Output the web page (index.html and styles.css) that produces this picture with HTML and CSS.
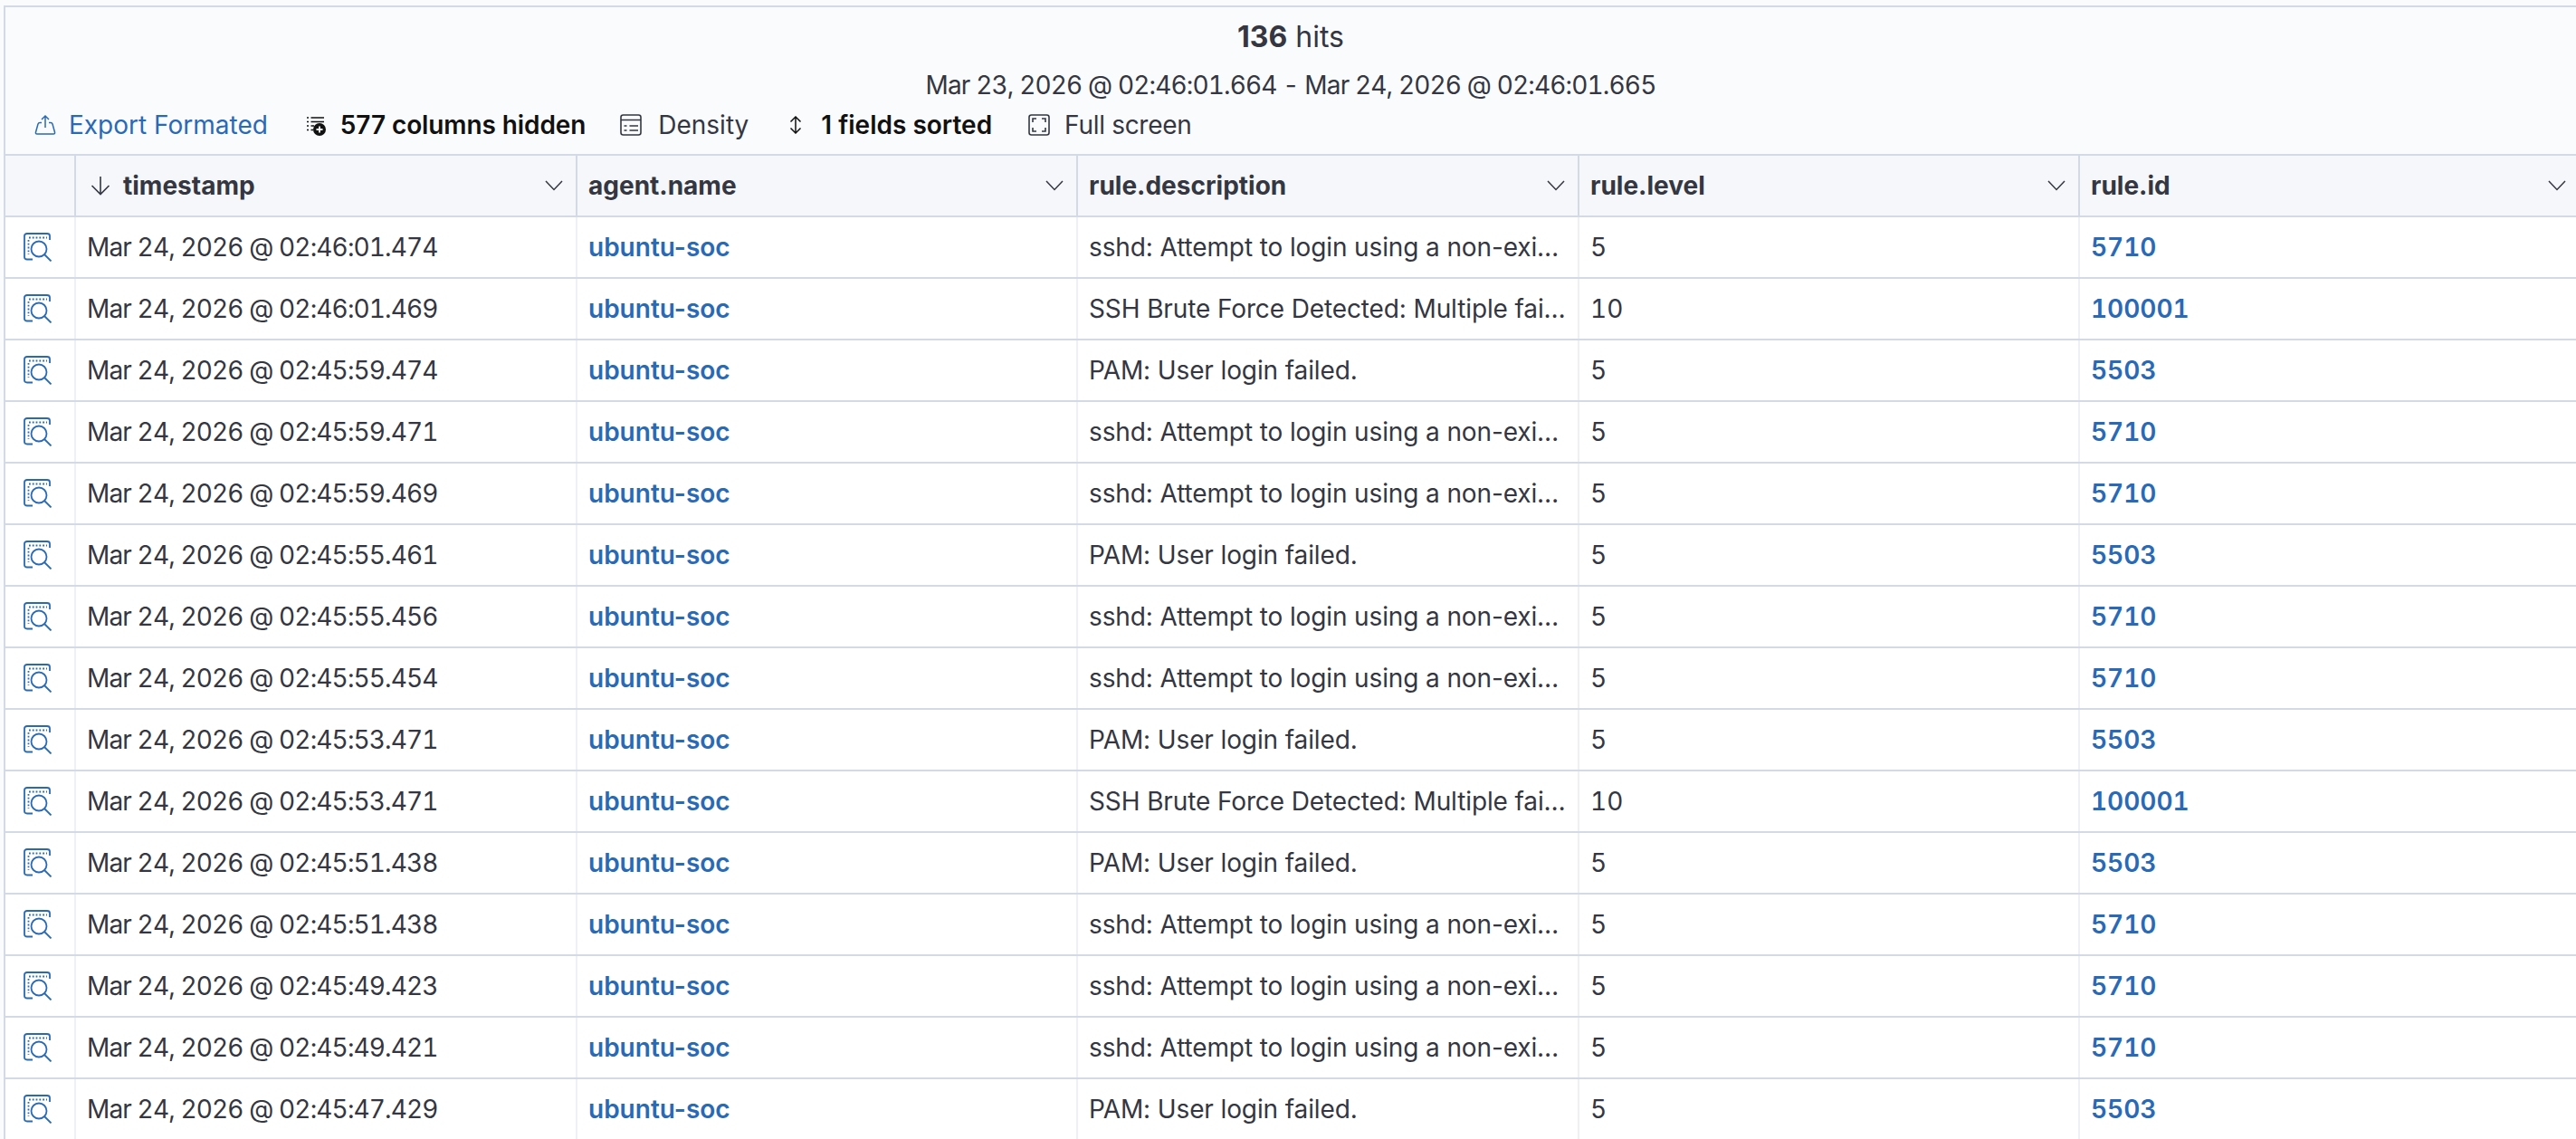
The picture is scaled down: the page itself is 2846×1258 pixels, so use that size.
FILE: index.html
```html
<!DOCTYPE html>
<html lang="en">
<head>
<meta charset="utf-8">
<title>Events</title>
<link rel="stylesheet" href="styles.css">
</head>
<body>
<svg class="defs" width="0" height="0" aria-hidden="true">
  <symbol id="inspect" viewBox="0 0 32 32">
    <path d="M10 29.500H4Q1 29.500 1 27V3.500Q1 1 4 1H26Q29 1 29 3.500V8" fill="none" stroke="currentColor" stroke-width="1.800"/>
    <path d="M6 5.500H26M5.500 8V24" fill="none" stroke="currentColor" stroke-width="1.800" stroke-dasharray="1.800 2"/>
    <circle cx="17" cy="18" r="8.500" fill="none" stroke="currentColor" stroke-width="1.800"/>
    <path d="M23 24L30.500 31.500" fill="none" stroke="currentColor" stroke-width="1.800"/>
  </symbol>
  <symbol id="chev" viewBox="0 0 20 12">
    <path d="M1 1L10 10.500L19 1" fill="none" stroke="currentColor" stroke-width="1.500"/>
  </symbol>
</svg>
<main class="panel">
  <section class="toolbar">
    <div class="hits"><strong>136</strong> hits</div>
    <div class="range">Mar 23, 2026 @ 02:46:01.664 - Mar 24, 2026 @ 02:46:01.665</div>
    <div class="controls">
      <span class="ctl ctl-export">
        <svg class="ico" viewBox="0 0 24 24"><path d="M8 9.500H6Q4.500 9.500 4 11L1.500 20Q1 22 3 22H21Q23 22 22.500 20L20 11Q19.500 9.500 18 9.500H16M12 15V2.500M8 6L12 2L16 6" fill="none" stroke="currentColor" stroke-width="1.500"/></svg>
        Export Formated
      </span>
      <span class="ctl ctl-strong ctl-columns">
        <svg class="ico" viewBox="0 0 24 24"><path d="M1 4H3M1 8.500H3M1 13H3M1 17.500H3M5.500 4H20M5.500 8.500H20M5.500 13H9M5.500 17.500H8" fill="none" stroke="currentColor" stroke-width="1.500"/><circle cx="15" cy="17" r="7" fill="currentColor"/><path d="M15 13.500V20.500M11.500 17H18.500" stroke="#fafbfd" stroke-width="1.800"/></svg>
        577 columns hidden
      </span>
      <span class="ctl ctl-density">
        <svg class="ico" viewBox="0 0 24 24"><rect x="1" y="1" width="22" height="22" rx="2.500" fill="none" stroke="currentColor" stroke-width="1.600"/><path d="M1 6.500H23M4.500 13H7.500M10.500 13H20M4.500 18H7.500M10.500 18H20" fill="none" stroke="currentColor" stroke-width="1.600"/></svg>
        Density
      </span>
      <span class="ctl ctl-strong ctl-sort">
        <svg class="ico ico-sort" viewBox="0 0 16 20"><path d="M8 1V19M2.500 6.500L8 1L13.500 6.500M2.500 13.500L8 19L13.500 13.500" fill="none" stroke="currentColor" stroke-width="1.500"/></svg>
        1 fields sorted
      </span>
      <span class="ctl ctl-full">
        <svg class="ico" viewBox="0 0 24 24"><rect x="1" y="1" width="22" height="22" rx="2.500" fill="none" stroke="currentColor" stroke-width="1.600"/><path d="M5 9V5H9M15 5H19V9M19 15V19H15M9 19H5V15" fill="none" stroke="currentColor" stroke-width="1.600"/></svg>
        Full screen
      </span>
    </div>
  </section>
  <section class="grid">
    <div class="row head">
      <div class="cell c0"></div>
      <div class="cell c1"><svg class="sort" viewBox="0 0 22 22"><path d="M11 1V20.500M1.500 11L11 20.500L20.500 11" fill="none" stroke="currentColor" stroke-width="1.600"/></svg><span class="name">timestamp</span><svg class="chev"><use href="#chev"/></svg></div>
      <div class="cell c2"><span class="name">agent.name</span><svg class="chev"><use href="#chev"/></svg></div>
      <div class="cell c3"><span class="name">rule.description</span><svg class="chev"><use href="#chev"/></svg></div>
      <div class="cell c4"><span class="name">rule.level</span><svg class="chev"><use href="#chev"/></svg></div>
      <div class="cell c5"><span class="name">rule.id</span><svg class="chev"><use href="#chev"/></svg></div>
    </div>
    <div class="row"><div class="cell c0"><svg class="inspect"><use href="#inspect"/></svg></div><div class="cell c1 ts">Mar 24, 2026 @ 02:46:01.474</div><div class="cell c2 link">ubuntu-soc</div><div class="cell c3 desc">sshd: Attempt to login using a non-exi…</div><div class="cell c4 num">5</div><div class="cell c5 link num">5710</div></div>
    <div class="row"><div class="cell c0"><svg class="inspect"><use href="#inspect"/></svg></div><div class="cell c1 ts">Mar 24, 2026 @ 02:46:01.469</div><div class="cell c2 link">ubuntu-soc</div><div class="cell c3 desc">SSH Brute Force Detected: Multiple fai…</div><div class="cell c4 num">10</div><div class="cell c5 link num">100001</div></div>
    <div class="row"><div class="cell c0"><svg class="inspect"><use href="#inspect"/></svg></div><div class="cell c1 ts">Mar 24, 2026 @ 02:45:59.474</div><div class="cell c2 link">ubuntu-soc</div><div class="cell c3 desc">PAM: User login failed.</div><div class="cell c4 num">5</div><div class="cell c5 link num">5503</div></div>
    <div class="row"><div class="cell c0"><svg class="inspect"><use href="#inspect"/></svg></div><div class="cell c1 ts">Mar 24, 2026 @ 02:45:59.471</div><div class="cell c2 link">ubuntu-soc</div><div class="cell c3 desc">sshd: Attempt to login using a non-exi…</div><div class="cell c4 num">5</div><div class="cell c5 link num">5710</div></div>
    <div class="row"><div class="cell c0"><svg class="inspect"><use href="#inspect"/></svg></div><div class="cell c1 ts">Mar 24, 2026 @ 02:45:59.469</div><div class="cell c2 link">ubuntu-soc</div><div class="cell c3 desc">sshd: Attempt to login using a non-exi…</div><div class="cell c4 num">5</div><div class="cell c5 link num">5710</div></div>
    <div class="row"><div class="cell c0"><svg class="inspect"><use href="#inspect"/></svg></div><div class="cell c1 ts">Mar 24, 2026 @ 02:45:55.461</div><div class="cell c2 link">ubuntu-soc</div><div class="cell c3 desc">PAM: User login failed.</div><div class="cell c4 num">5</div><div class="cell c5 link num">5503</div></div>
    <div class="row"><div class="cell c0"><svg class="inspect"><use href="#inspect"/></svg></div><div class="cell c1 ts">Mar 24, 2026 @ 02:45:55.456</div><div class="cell c2 link">ubuntu-soc</div><div class="cell c3 desc">sshd: Attempt to login using a non-exi…</div><div class="cell c4 num">5</div><div class="cell c5 link num">5710</div></div>
    <div class="row"><div class="cell c0"><svg class="inspect"><use href="#inspect"/></svg></div><div class="cell c1 ts">Mar 24, 2026 @ 02:45:55.454</div><div class="cell c2 link">ubuntu-soc</div><div class="cell c3 desc">sshd: Attempt to login using a non-exi…</div><div class="cell c4 num">5</div><div class="cell c5 link num">5710</div></div>
    <div class="row"><div class="cell c0"><svg class="inspect"><use href="#inspect"/></svg></div><div class="cell c1 ts">Mar 24, 2026 @ 02:45:53.471</div><div class="cell c2 link">ubuntu-soc</div><div class="cell c3 desc">PAM: User login failed.</div><div class="cell c4 num">5</div><div class="cell c5 link num">5503</div></div>
    <div class="row"><div class="cell c0"><svg class="inspect"><use href="#inspect"/></svg></div><div class="cell c1 ts">Mar 24, 2026 @ 02:45:53.471</div><div class="cell c2 link">ubuntu-soc</div><div class="cell c3 desc">SSH Brute Force Detected: Multiple fai…</div><div class="cell c4 num">10</div><div class="cell c5 link num">100001</div></div>
    <div class="row"><div class="cell c0"><svg class="inspect"><use href="#inspect"/></svg></div><div class="cell c1 ts">Mar 24, 2026 @ 02:45:51.438</div><div class="cell c2 link">ubuntu-soc</div><div class="cell c3 desc">PAM: User login failed.</div><div class="cell c4 num">5</div><div class="cell c5 link num">5503</div></div>
    <div class="row"><div class="cell c0"><svg class="inspect"><use href="#inspect"/></svg></div><div class="cell c1 ts">Mar 24, 2026 @ 02:45:51.438</div><div class="cell c2 link">ubuntu-soc</div><div class="cell c3 desc">sshd: Attempt to login using a non-exi…</div><div class="cell c4 num">5</div><div class="cell c5 link num">5710</div></div>
    <div class="row"><div class="cell c0"><svg class="inspect"><use href="#inspect"/></svg></div><div class="cell c1 ts">Mar 24, 2026 @ 02:45:49.423</div><div class="cell c2 link">ubuntu-soc</div><div class="cell c3 desc">sshd: Attempt to login using a non-exi…</div><div class="cell c4 num">5</div><div class="cell c5 link num">5710</div></div>
    <div class="row"><div class="cell c0"><svg class="inspect"><use href="#inspect"/></svg></div><div class="cell c1 ts">Mar 24, 2026 @ 02:45:49.421</div><div class="cell c2 link">ubuntu-soc</div><div class="cell c3 desc">sshd: Attempt to login using a non-exi…</div><div class="cell c4 num">5</div><div class="cell c5 link num">5710</div></div>
    <div class="row"><div class="cell c0"><svg class="inspect"><use href="#inspect"/></svg></div><div class="cell c1 ts">Mar 24, 2026 @ 02:45:47.429</div><div class="cell c2 link">ubuntu-soc</div><div class="cell c3 desc">PAM: User login failed.</div><div class="cell c4 num">5</div><div class="cell c5 link num">5503</div></div>
  </section>
</main>
</body>
</html>
```
FILE: styles.css
```css
* { box-sizing: border-box; }
html, body { margin: 0; height: 100%; overflow: hidden; background: #fafbfd; }
body { font-family: Inter, "Liberation Sans", sans-serif; font-size: 28px; color: #343741; padding: 6px 0 0 4px; }
.defs { position: absolute; }
.panel { border-top: 2px solid #d3dae6; border-left: 2px solid #d3dae6; }
.toolbar { height: 162px; background: #fafbfd; display: flex; flex-direction: column; align-items: center; padding-top: 11px; }
.hits { font-size: 32px; line-height: 44px; }
.hits strong { font-weight: 700; }
.range { line-height: 36px; margin-top: 13px; font-variant-numeric: tabular-nums; letter-spacing: -0.85px; }
.controls { align-self: flex-start; display: flex; align-items: center; height: 40px; margin-top: 6px; padding-left: 32px; line-height: 40px; }
.ctl { display: flex; align-items: center; white-space: nowrap; }
.ico { width: 24px; height: 24px; margin-right: 14px; flex: none; }
.ico-sort { width: 16px; height: 20px; margin-right: 20px; }
.ctl-export { color: #2a6ab5; margin-right: 42px; }
.ctl-strong { font-weight: 600; color: #111; }
.ctl-columns { margin-right: 38px; letter-spacing: -0.1px; }
.ctl-density { margin-right: 44px; }
.ctl-density .ico { margin-right: 18px; }
.ctl-sort { margin-right: 40px; }
.ctl-full { letter-spacing: -0.3px; }
.ctl-full .ico { margin-right: 16px; }
.grid { background: #fff; }
.row { display: grid; grid-template-columns: 78px 554px 553px 554px 553px 553px; height: 68px; border-bottom: 2px solid #d3dae6; }
.head { height: 70px; border-top: 2px solid #d3dae6; background: #f5f7fa; font-weight: 700; }
.cell { display: flex; align-items: center; padding: 0 12px; border-right: 2px solid #eef0f6; white-space: nowrap; min-width: 0; }
.head .cell { border-right-color: #d3dae6; }
.c0 { padding: 0 0 0 20px; }
.c1.ts { font-variant-numeric: tabular-nums; letter-spacing: -0.87px; }
.desc { letter-spacing: -0.12px; }
.name { flex: 1; }
.sort { width: 22px; height: 22px; margin: 0 14px 0 4px; flex: none; }
.chev { width: 20px; height: 12px; flex: none; margin-right: 2px; color: #343741; }
.link { color: #2a6ab5; font-weight: 600; }
.num { font-variant-numeric: tabular-nums; }
.inspect { width: 32px; height: 32px; color: #2a6ab5; }
```
